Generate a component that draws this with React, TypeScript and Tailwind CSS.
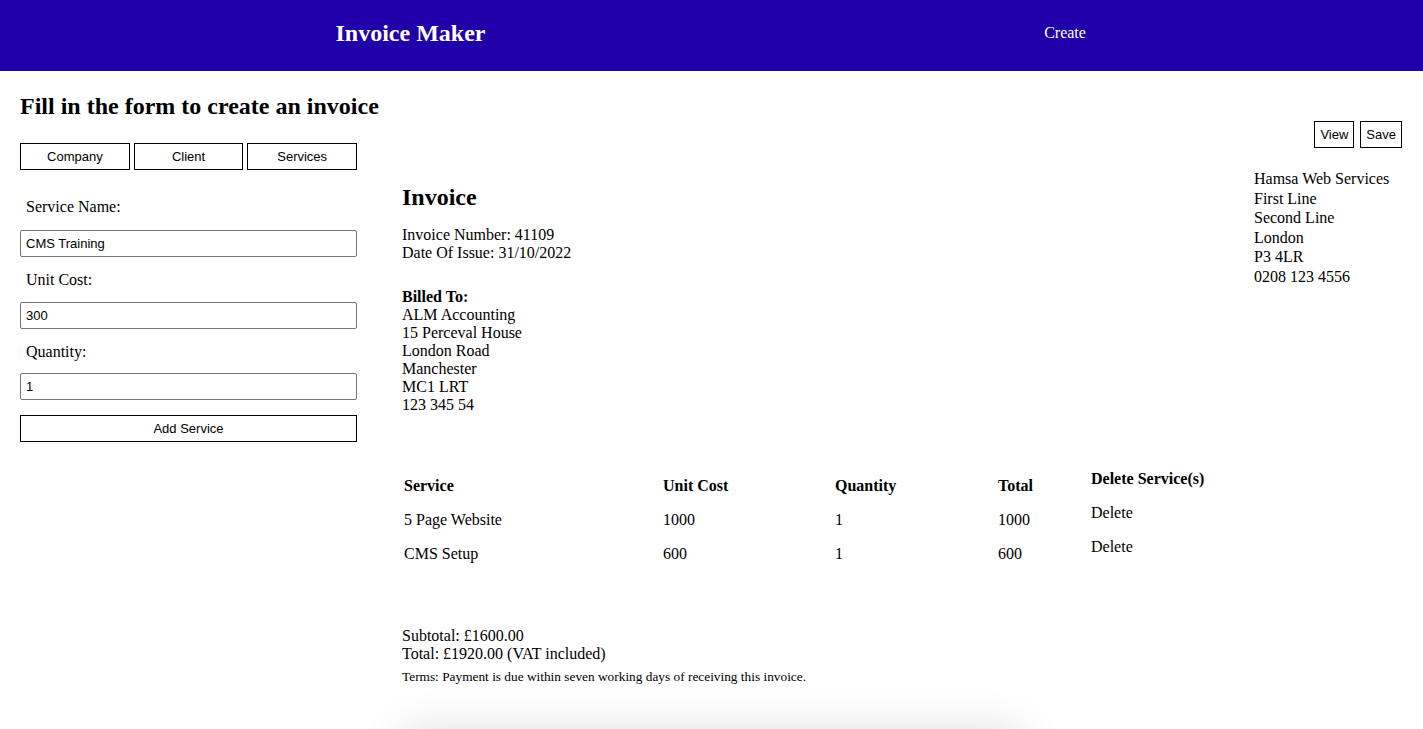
import React from "react";

const serif = { fontFamily: '"Liberation Serif", "Times New Roman", serif' };
const sans = { fontFamily: '"Liberation Sans", Arial, sans-serif' };

export default function App() {
  return (
    <div className="min-h-screen bg-white text-black text-[16px]" style={serif}>
      <header className="h-[71px] bg-[#2000a8] flex items-center pb-[6px] text-white">
        <div className="w-[711px] flex justify-center pl-[110px]">
          <h1 className="text-[24px] font-bold leading-[28px]">Invoice Maker</h1>
        </div>
        <div className="w-[712px] flex justify-center pr-[4px]">
          <span className="text-[16px] leading-[18px]">Create</span>
        </div>
      </header>

      <div className="px-[20px]">
        <h2 className="mt-[22px] text-[24px] font-bold leading-[27px]">Fill in the form to create an invoice</h2>

        <div className="flex">
          {/* left form */}
          <div className="w-[337px] pt-[23px] shrink-0">
            <div className="flex gap-[4px]" style={sans}>
              {["Company", "Client", "Services"].map((t) => (
                <button key={t} className="w-[110px] h-[27px] border border-black bg-white text-[13px] leading-none">
                  {t}
                </button>
              ))}
            </div>
            <form className="mt-[28px] flex flex-col">
              <label className="pl-[6px] leading-[18px] h-[18px]">Service Name:</label>
              <input
                readOnly
                value="CMS Training"
                className="mt-[14px] h-[27px] border border-[#767676] rounded-[2px] px-[5px] text-[13px]"
                style={sans}
              />
              <label className="mt-[14px] pl-[6px] leading-[18px] h-[18px]">Unit Cost:</label>
              <input
                readOnly
                value="300"
                className="mt-[13px] h-[27px] border border-[#767676] rounded-[2px] px-[5px] text-[13px]"
                style={sans}
              />
              <label className="mt-[14px] pl-[6px] leading-[18px] h-[18px]">Quantity:</label>
              <input
                readOnly
                value="1"
                className="mt-[12px] h-[27px] border border-[#767676] rounded-[2px] px-[5px] text-[13px]"
                style={sans}
              />
              <button
                type="button"
                className="mt-[15px] h-[27px] border border-black bg-white text-[13px]"
                style={sans}
              >
                Add Service
              </button>
            </form>
          </div>

          {/* right invoice */}
          <div className="flex-1 ml-[45px] pr-[1px]">
            <div className="flex justify-end gap-[6px] mt-[1px]" style={sans}>
              <button className="h-[27px] px-[5px] border border-black bg-white text-[13px]">View</button>
              <button className="h-[27px] px-[5px] border border-black bg-white text-[13px]">Save</button>
            </div>

            <div className="flex justify-between">
              <div className="mt-[35px]">
                <h3 className="text-[24px] font-bold leading-[28px]">Invoice</h3>
                <div className="mt-[15px] leading-[18px]">
                  <p>Invoice Number: 41109</p>
                  <p>Date Of Issue: 31/10/2022</p>
                </div>
                <div className="mt-[26px] leading-[18px]">
                  <p className="font-bold">Billed To:</p>
                  <p>ALM Accounting</p>
                  <p>15 Perceval House</p>
                  <p>London Road</p>
                  <p>Manchester</p>
                  <p>MC1 LRT</p>
                  <p>123 345 54</p>
                </div>
              </div>
              <div className="mt-[21px] w-[148px] leading-[19.6px]">
                <p>Hamsa Web Services</p>
                <p>First Line</p>
                <p>Second Line</p>
                <p>London</p>
                <p>P3 4LR</p>
                <p>0208 123 4556</p>
              </div>
            </div>

            <div className="mt-[55px] flex">
              <table className="border-separate border-spacing-0 text-left">
                <thead>
                  <tr className="h-[34px]">
                    <th className="w-[259px] pl-[2px] font-bold">Service</th>
                    <th className="w-[172px] pl-[2px] font-bold">Unit Cost</th>
                    <th className="w-[163px] pl-[2px] font-bold">Quantity</th>
                    <th className="w-[90px] pl-[2px] font-bold">Total</th>
                  </tr>
                </thead>
                <tbody>
                  <tr className="h-[34px]">
                    <td className="pl-[2px]">5 Page Website</td>
                    <td className="pl-[2px]">1000</td>
                    <td className="pl-[2px]">1</td>
                    <td className="pl-[2px]">1000</td>
                  </tr>
                  <tr className="h-[34px]">
                    <td className="pl-[2px]">CMS Setup</td>
                    <td className="pl-[2px]">600</td>
                    <td className="pl-[2px]">1</td>
                    <td className="pl-[2px]">600</td>
                  </tr>
                </tbody>
              </table>
              <div className="ml-[5px] -mt-[7px]">
                <div className="h-[34px] flex items-center font-bold">Delete Service(s)</div>
                <div className="h-[34px] flex items-center">Delete</div>
                <div className="h-[34px] flex items-center">Delete</div>
              </div>
            </div>

            <div className="mt-[56px] leading-[18px]">
              <p>Subtotal: £1600.00</p>
              <p>Total: £1920.00 (VAT included)</p>
              <p className="mt-[6px] text-[13.33px] leading-[16px]">
                Terms: Payment is due within seven working days of receiving this invoice.
              </p>
            </div>

            <div className="mt-[44px] w-[620px] h-[300px] bg-white shadow-[0_0_40px_rgba(0,0,0,0.12)]" />
          </div>
        </div>
      </div>
    </div>
  );
}
